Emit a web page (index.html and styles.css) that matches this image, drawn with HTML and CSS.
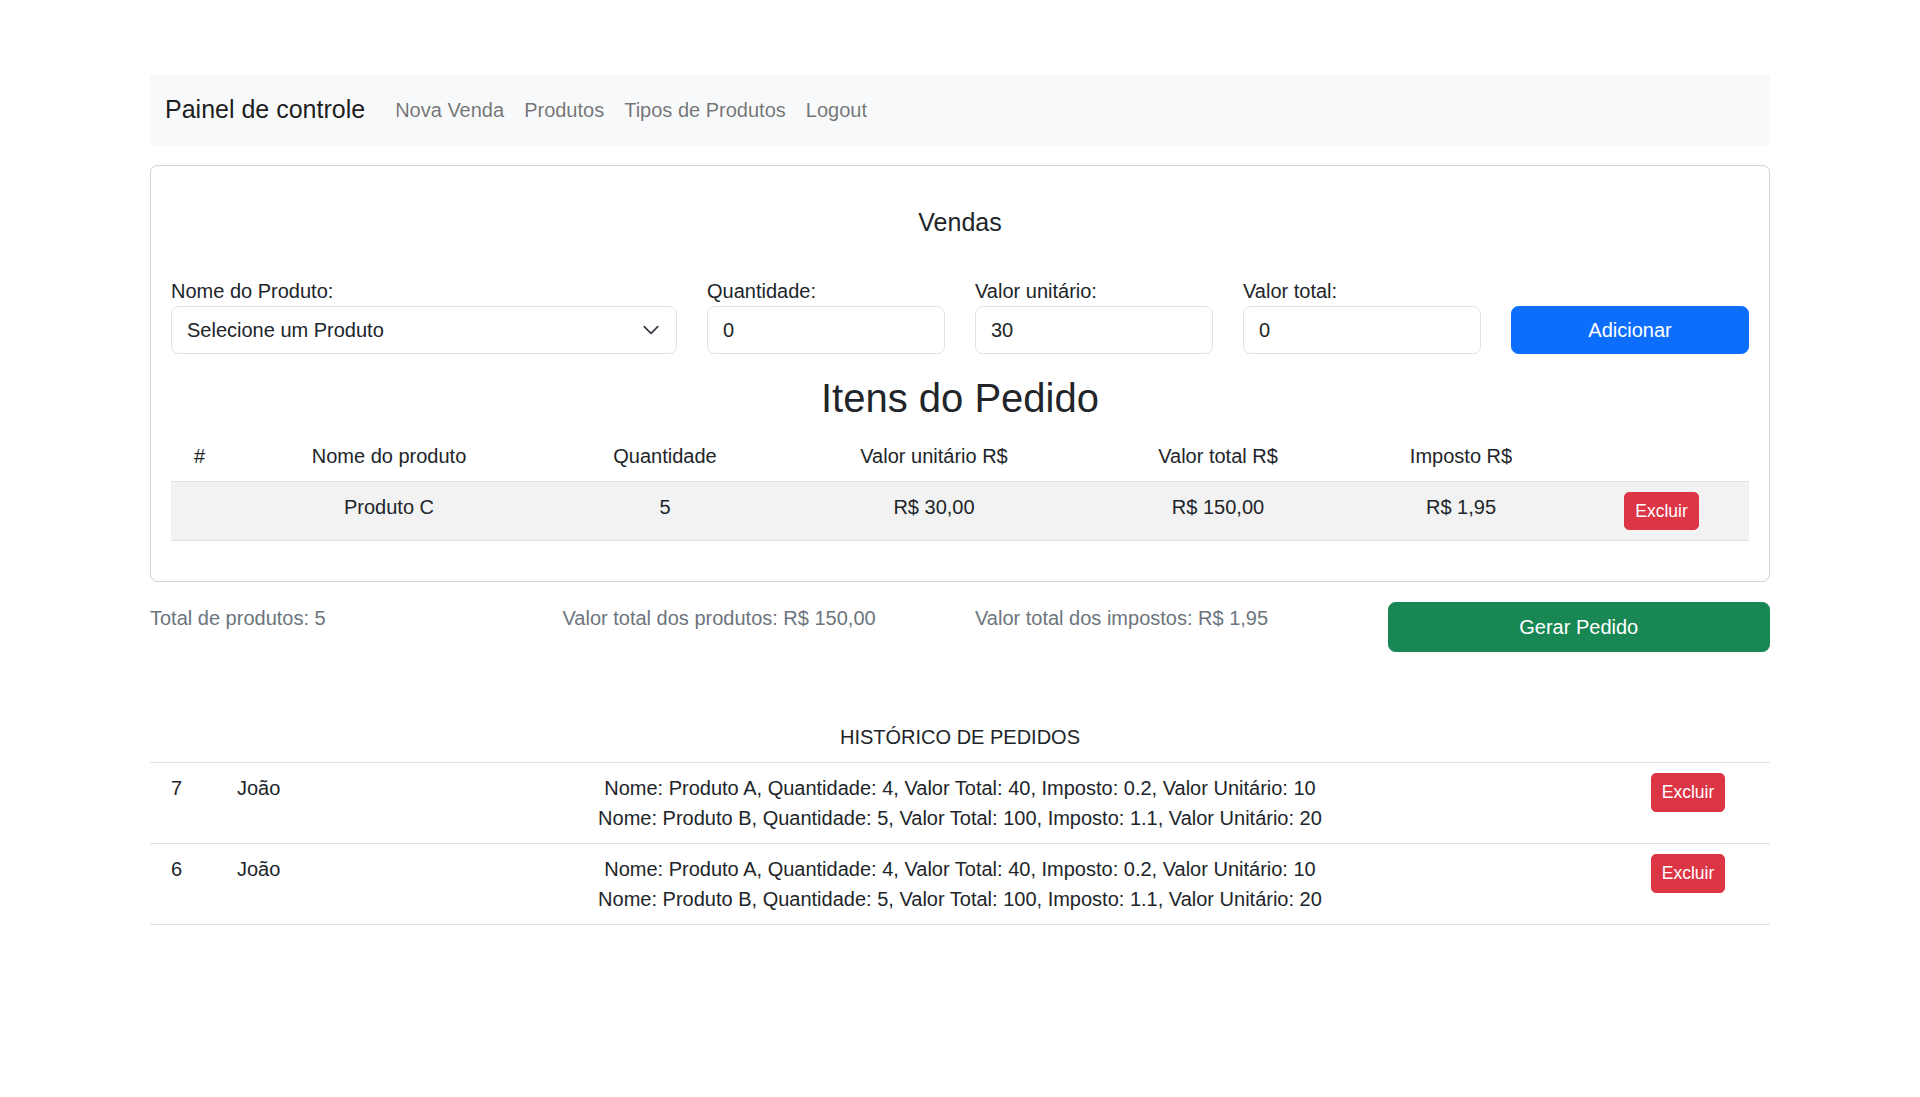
FILE: index.html
```html
<!DOCTYPE html>
<html lang="pt-BR">
<head>
<meta charset="utf-8">
<title>Painel de controle</title>
<link rel="stylesheet" href="styles.css">
</head>
<body>
<div class="container">
  <nav class="navbar">
    <span class="brand">Painel de controle</span>
    <a class="nav-link">Nova Venda</a>
    <a class="nav-link">Produtos</a>
    <a class="nav-link">Tipos de Produtos</a>
    <a class="nav-link">Logout</a>
  </nav>

  <div class="card">
    <div class="card-body">
      <div class="card-title">Vendas</div>
      <div class="form-row">
        <div class="field">
          <label class="form-label">Nome do Produto:</label>
          <div class="form-select">
            <span>Selecione um Produto</span>
            <svg class="chevron" width="18" height="18" viewBox="0 0 16 16"><path d="m2 5 6 6 6-6" fill="none" stroke="#343a40" stroke-linecap="round" stroke-linejoin="round" stroke-width="1.5"/></svg>
          </div>
        </div>
        <div class="field">
          <label class="form-label">Quantidade:</label>
          <div class="form-control">0</div>
        </div>
        <div class="field">
          <label class="form-label">Valor unitário:</label>
          <div class="form-control">30</div>
        </div>
        <div class="field">
          <label class="form-label">Valor total:</label>
          <div class="form-control">0</div>
        </div>
        <div class="field">
          <button class="btn btn-primary">Adicionar</button>
        </div>
      </div>

      <h2 class="items-title">Itens do Pedido</h2>
      <table class="items-table">
        <colgroup>
          <col class="c1"><col class="c2"><col class="c3"><col class="c4"><col class="c5"><col class="c6"><col class="c7">
        </colgroup>
        <thead>
          <tr><th>#</th><th>Nome do produto</th><th>Quantidade</th><th>Valor unitário R$</th><th>Valor total R$</th><th>Imposto R$</th><th></th></tr>
        </thead>
        <tbody>
          <tr class="striped"><td></td><td>Produto C</td><td>5</td><td>R$ 30,00</td><td>R$ 150,00</td><td>R$ 1,95</td><td><button class="btn btn-sm btn-danger">Excluir</button></td></tr>
        </tbody>
      </table>
    </div>
  </div>

  <div class="summary">
    <p class="muted">Total de produtos: 5</p>
    <p class="muted">Valor total dos produtos: R$ 150,00</p>
    <p class="muted">Valor total dos impostos: R$ 1,95</p>
    <button class="btn btn-success btn-block">Gerar Pedido</button>
  </div>

  <table class="history">
    <colgroup>
      <col class="h1"><col class="h2"><col class="h3"><col class="h4">
    </colgroup>
    <thead>
      <tr><th colspan="4">HISTÓRICO DE PEDIDOS</th></tr>
    </thead>
    <tbody>
      <tr>
        <td class="num">7</td>
        <td>João</td>
        <td class="desc">Nome: Produto A, Quantidade: 4, Valor Total: 40, Imposto: 0.2, Valor Unitário: 10<br>Nome: Produto B, Quantidade: 5, Valor Total: 100, Imposto: 1.1, Valor Unitário: 20</td>
        <td class="act"><button class="btn btn-sm btn-danger">Excluir</button></td>
      </tr>
      <tr>
        <td class="num">6</td>
        <td>João</td>
        <td class="desc">Nome: Produto A, Quantidade: 4, Valor Total: 40, Imposto: 0.2, Valor Unitário: 10<br>Nome: Produto B, Quantidade: 5, Valor Total: 100, Imposto: 1.1, Valor Unitário: 20</td>
        <td class="act"><button class="btn btn-sm btn-danger">Excluir</button></td>
      </tr>
    </tbody>
  </table>
</div>
</body>
</html>
```
FILE: styles.css
```css
* { box-sizing: border-box; }
html, body { margin: 0; padding: 0; background: #fff; }
body {
  font-family: "Liberation Sans", Arial, sans-serif;
  font-size: 20px;
  line-height: 30px;
  color: #212529;
}
.container {
  width: 1620px;
  margin: 0 auto;
  padding-top: 75px;
}
.navbar {
  display: flex;
  align-items: center;
  height: 70px;
  padding: 0 15px;
  background: #f8f9fa;
}
.brand {
  font-size: 25px;
  line-height: 37.5px;
  color: rgba(0,0,0,.9);
  margin-right: 20px;
}
.nav-link {
  padding: 0 10px;
  color: rgba(0,0,0,.55);
  font-size: 20px;
}
.card {
  margin-top: 20px;
  border: 1px solid rgba(0,0,0,.175);
  border-radius: 7.5px;
}
.card-body { padding: 20px; }
.card-title {
  text-align: center;
  font-size: 25px;
  line-height: 30px;
  padding-top: 21px;
  margin-bottom: 39px;
}
.form-row {
  display: grid;
  grid-template-columns: 506px 238px 238px 238px 238px;
  column-gap: 30px;
  align-items: end;
}
.form-label { display: block; line-height: 30px; }
.form-control, .form-select {
  height: 47.5px;
  border: 1px solid #dee2e6;
  border-radius: 7.5px;
  padding: 7.5px 15px;
  line-height: 30px;
  background: #fff;
}
.form-select {
  display: flex;
  align-items: center;
  justify-content: space-between;
  padding-right: 16px;
}
.chevron { display: block; }
.btn {
  font-family: inherit;
  border: 1px solid transparent;
  color: #fff;
  font-size: 20px;
  line-height: 30px;
  border-radius: 7.5px;
  padding: 7.5px 15px;
  cursor: pointer;
}
.btn-primary { background: #0d6efd; border-color: #0d6efd; width: 100%; height: 47.5px; }
.btn-success { background: #198754; border-color: #198754; }
.btn-danger { background: #dc3545; border-color: #dc3545; }
.btn-sm {
  font-size: 17.5px;
  line-height: 26.25px;
  padding: 5px 10px;
  border-radius: 5px;
}
.btn-block { width: 100%; height: 50.5px; padding: 9px 15px; }
.items-title {
  text-align: center;
  font-size: 40px;
  line-height: 48px;
  font-weight: 500;
  margin: 20px 0 9px;
}
.items-table, .history {
  width: 100%;
  border-collapse: collapse;
  table-layout: fixed;
}
.items-table { margin-bottom: 20px; }
.items-table th, .items-table td {
  font-weight: normal;
  text-align: center;
  vertical-align: top;
  padding: 10px;
  border-bottom: 1px solid #dee2e6;
}
.items-table td .btn { vertical-align: top; }
.items-table .c1 { width: 57px; }
.items-table .c2 { width: 322px; }
.items-table .c3 { width: 230px; }
.items-table .c4 { width: 308px; }
.items-table .c5 { width: 260px; }
.items-table .c6 { width: 226px; }
.items-table .c7 { width: 175px; }
.striped { background: #f2f2f2; }
.summary {
  display: grid;
  grid-template-columns: repeat(4, 1fr);
  column-gap: 30px;
  margin-top: 20px;
  align-items: start;
}
.summary p { margin: 1px 0 0; }
.muted { color: #6c757d; }
.history { margin-top: 60px; }
.history th {
  font-weight: normal;
  text-align: center;
  padding: 10px;
  border-bottom: 1px solid #dee2e6;
}
.history td {
  vertical-align: top;
  padding: 10px;
  border-bottom: 1px solid #dee2e6;
}
.history .h1 { width: 77px; }
.history .h2 { width: 87px; }
.history .h3 { width: auto; }
.history .h4 { width: 164px; }
.history td.num { padding-left: 21px; }
.history td.desc { text-align: center; }
.history td.act { text-align: center; }
.history td .btn { vertical-align: top; }
```
